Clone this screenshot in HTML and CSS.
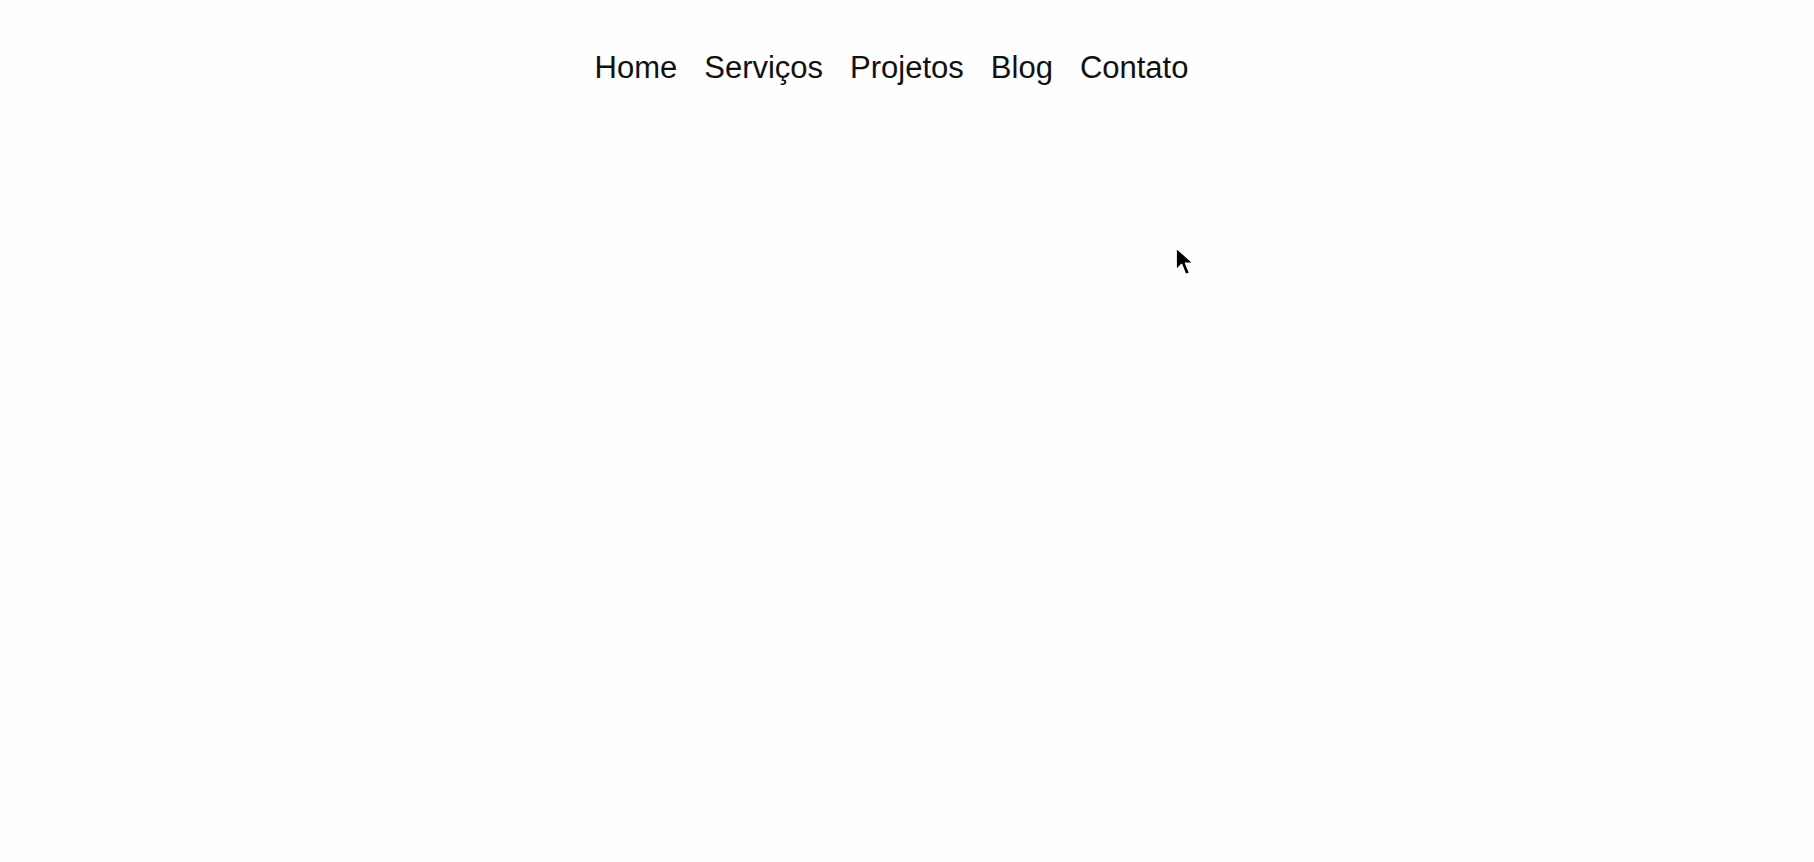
FILE: index.html
```html
<!DOCTYPE html>
<html lang="pt">
<head>
<meta charset="utf-8">
<title>Menu</title>
<link rel="stylesheet" href="styles.css">
</head>
<body>
<nav class="nav">
  <ul class="menu">
    <li class="item"><a href="#">Home</a></li>
    <li class="item"><a href="#">Serviços</a></li>
    <li class="item"><a href="#">Projetos</a></li>
    <li class="item"><a href="#">Blog</a></li>
    <li class="item"><a href="#">Contato</a></li>
  </ul>
</nav>
<svg class="cursor" width="24" height="31" viewBox="0 0 20 26">
  <path d="M1 1 L1 19 L5.5 14.5 L9 23 L12 21.7 L8.6 13.4 L15 13.4 Z" fill="#000" stroke="#fff" stroke-width="1" stroke-linejoin="round"/>
</svg>
</body>
</html>
```
FILE: styles.css
```css
html, body {
  margin: 0;
  padding: 0;
  background: #fefefe;
}
body {
  font-family: "Liberation Sans", Arial, sans-serif;
  min-height: 862px;
  position: relative;
}
.nav {
  padding-top: 52px;
}
.menu {
  list-style: none;
  margin: 0;
  padding: 0 4px 0 0;
  display: flex;
  justify-content: center;
}
.item {
  margin-right: 27px;
}
.item a {
  color: #111;
  text-decoration: none;
  font-size: 31px;
  line-height: 32px;
}
.cursor {
  position: absolute;
  left: 1175px;
  top: 247px;
}
```
